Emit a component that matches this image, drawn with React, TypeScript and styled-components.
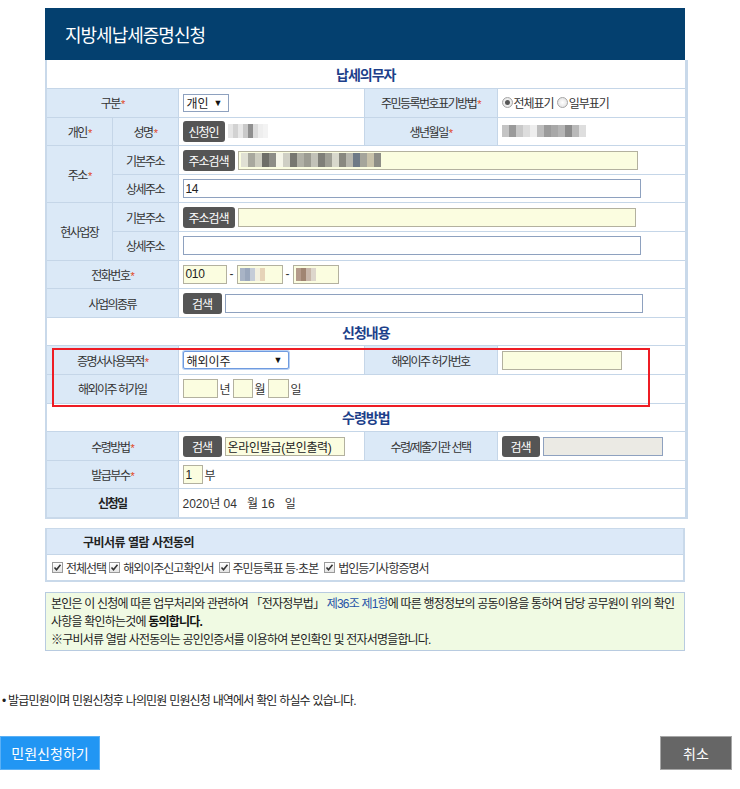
import * as React from 'react';
import styled, { createGlobalStyle, css } from 'styled-components';

const GlobalStyle = createGlobalStyle`
  html, body {
    margin: 0;
    padding: 0;
    background: #ffffff;
  }
  body {
    font-family: "Liberation Sans", "Noto Sans CJK KR", sans-serif;
    font-size: 12px;
    color: #333333;
  }
`;

const Page = styled.div`
  width: 740px;
  height: 789px;
  position: relative;
  padding-top: 8px;
  box-sizing: border-box;
`;

const Form = styled.div`
  margin-left: 45px;
  width: 640px;
`;

const Header = styled.div`
  height: 52px;
  background: #04406f;
  color: #ffffff;
  display: flex;
  align-items: center;
  padding-left: 20px;
  font-size: 18px;
  letter-spacing: -1px;
  font-family: "Noto Sans CJK KR", sans-serif;
`;

const TableWrap = styled.div`
  position: relative;
`;

const Table = styled.table`
  width: 640px;
  border-collapse: collapse;
  table-layout: fixed;
  border-left: 2px solid #c9d9ea;
  border-right: 3px solid #c9d9ea;
  border-bottom: 2px solid #c9d9ea;
`;

const Row = styled.tr`
  height: 28.6px;
`;

const SectionTitle = styled.td`
  text-align: center;
  color: #1d3f8a;
  font-size: 14px;
  font-weight: bold;
  letter-spacing: -1px;
  border-bottom: 1px solid #c5d6e8;
  padding: 0;
`;

const Label = styled.td<{ strong?: boolean }>`
  background: #dbe9f7;
  text-align: center;
  border: 1px solid #c5d6e8;
  padding: 0 2px;
  letter-spacing: -1.5px;
  white-space: nowrap;
  ${p =>
    p.strong &&
    css`
      font-weight: bold;
      color: #222;
    `}
`;

const Value = styled.td`
  border: 1px solid #c5d6e8;
  padding: 0 4px;
  white-space: nowrap;
  background: #ffffff;
`;

const Cell = styled.div<{ gap?: number }>`
  display: flex;
  align-items: center;
  gap: ${p => (p.gap ?? 3)}px;
`;

const Req = styled.span`
  color: #e0451b;
  font-size: 11px;
  margin-left: 1px;
  &::after {
    content: '*';
  }
`;

const DarkButton = styled.span<{ w?: number }>`
  display: inline-flex;
  align-items: center;
  justify-content: center;
  height: 21px;
  padding: 0 6px;
  ${p => p.w && `width: ${p.w}px;`}
  background: #555555;
  color: #ffffff;
  border-radius: 3px;
  font-size: 12px;
  letter-spacing: -1px;
  box-sizing: border-box;
`;

const Input = styled.div<{ w: number; tone?: 'yellow' | 'white' | 'gray' }>`
  width: ${p => p.w}px;
  height: 19px;
  box-sizing: border-box;
  display: flex;
  align-items: center;
  padding-left: 2px;
  gap: 4px;
  font-size: 12px;
  color: #222;
  overflow: hidden;
  letter-spacing: -0.3px;
  background: ${p =>
    p.tone === 'yellow' ? '#fbfde0' : p.tone === 'gray' ? '#ebeae4' : '#ffffff'};
  border: 1px solid ${p => (p.tone === 'yellow' ? '#b3b19f' : '#8ea1bf')};
`;

const FakeSelect = styled.div<{ w: number; focus?: boolean }>`
  width: ${p => p.w}px;
  height: 18px;
  box-sizing: border-box;
  display: flex;
  align-items: center;
  justify-content: space-between;
  padding: 0 5px 0 3px;
  font-size: 12px;
  color: #222;
  background: #fff;
  border: 1px solid ${p => (p.focus ? '#6f9be0' : '#8ea1bf')};
  box-shadow: ${p => (p.focus ? '0 0 0 1px #b8d0f3' : 'none')};
  border-radius: ${p => (p.focus ? '2px' : '0')};
`;

const Arrow = styled.span`
  font-size: 9px;
  color: #111;
`;

const Unit = styled.span`
  letter-spacing: -1px;
  margin-right: 1px;
`;

const RadioWrap = styled.label`
  display: inline-flex;
  align-items: center;
  gap: 1px;
  letter-spacing: -1px;
`;

const RadioDot = styled.span<{ checked?: boolean }>`
  width: 11px;
  height: 11px;
  border-radius: 50%;
  border: 1px solid #a6a6a6;
  background: radial-gradient(circle, #ffffff 0%, #dcdcdc 100%);
  box-sizing: border-box;
  display: inline-flex;
  align-items: center;
  justify-content: center;
  &::after {
    content: '';
    width: 5px;
    height: 5px;
    border-radius: 50%;
    background: ${p => (p.checked ? '#555' : 'transparent')};
  }
`;

const Redbox = styled.div`
  position: absolute;
  left: 7px;
  top: 288px;
  width: 598px;
  height: 59px;
  border: 2px solid #ee1c24;
  box-sizing: border-box;
  pointer-events: none;
`;

const Consent = styled.div`
  margin-top: 9px;
  border: 2px solid #c9d9ea;
  border-top-width: 1px;
`;

const ConsentHead = styled.div`
  height: 25px;
  background: #dce9f8;
  border-bottom: 1px solid #c5d6e8;
  display: flex;
  align-items: center;
  padding-left: 36px;
  font-weight: bold;
  color: #222;
  letter-spacing: -0.5px;
`;

const CheckRow = styled.div`
  height: 25px;
  display: flex;
  align-items: center;
  padding-left: 5px;
  letter-spacing: -1px;
`;

const CheckItem = styled.span<{ gap: number }>`
  display: inline-flex;
  align-items: center;
  gap: 3px;
  margin-right: ${p => p.gap}px;
`;

const Box = styled.span`
  width: 11px;
  height: 11px;
  border: 1px solid #9a9a9a;
  background: linear-gradient(#ffffff, #e4e4e4);
  box-sizing: border-box;
  display: inline-flex;
  align-items: center;
  justify-content: center;
`;

const Notice = styled.div`
  margin-top: 10px;
  background: #f0fae3;
  border: 1px solid #b8cbe0;
  padding: 2px 5px 1px 5px;
  color: #222;
  letter-spacing: -0.8px;
`;

const NoticeLine = styled.div`
  height: 18px;
  line-height: 18px;
  white-space: nowrap;
`;

const LawLink = styled.span`
  color: #2653a7;
`;

const Strong = styled.b`
  color: #111;
`;

const Bullet = styled.div`
  margin-top: 40px;
  padding-left: 2px;
  letter-spacing: -0.8px;
  color: #222;
`;

const Actions = styled.div`
  margin-top: 28px;
  display: flex;
  justify-content: space-between;
  padding-right: 8px;
`;

const ActionButton = styled.div<{ primary?: boolean }>`
  height: 34px;
  box-sizing: border-box;
  display: flex;
  align-items: center;
  justify-content: center;
  color: #ffffff;
  font-size: 14px;
  font-family: "Noto Sans CJK KR", sans-serif;
  width: ${p => (p.primary ? '100px' : '72px')};
  background: ${p => (p.primary ? '#2196f3' : '#666666')};
  border: 1px solid ${p => (p.primary ? '#5ab0f5' : '#a7a7a7')};
`;

const Mosaic = ({ cells, w = 5, h = 14 }: { cells: string[]; w?: number; h?: number }) => (
  <svg width={cells.length * w} height={h} style={{ display: 'block' }}>
    {cells.map((c, i) => (
      <rect key={i} x={i * w} y={0} width={w} height={h} fill={c} />
    ))}
  </svg>
);

const Check = () => (
  <Box>
    <svg width="9" height="9" viewBox="0 0 9 9">
      <polyline points="1.5,4.5 3.5,6.8 7.5,1.8" fill="none" stroke="#333" strokeWidth="1.6" />
    </svg>
  </Box>
);

const Radio = ({ checked, children }: { checked?: boolean; children: React.ReactNode }) => (
  <RadioWrap>
    <RadioDot checked={checked} />
    {children}
  </RadioWrap>
);

const nameCells = ['#e6e6e6', '#d2d2d2', '#e8e8e8', '#c9c9c9', '#8f8f8f', '#dcdcdc', '#eeeeee', '#f3f3f3'];
const birthCells = [
  '#c4c4c4', '#9a9a9a', '#c9c9c9', '#dddddd', '#eeeeee', '#bdbdbd', '#9b9b9b',
  '#a8a8a8', '#b5b5b5', '#8c8c8c', '#b9b9b9', '#dedede',
];
const addrCells = [
  '#e0e0d4', '#a8a89e', '#cdcdc0', '#6e6e68', '#8d8d86', '#f5f5e8', '#cfcfc4', '#777770',
  '#b1b1a6', '#9c9c92', '#c2c2b8', '#7f7f78', '#a0a096', '#d8d8cc', '#88887f', '#b7b7ad',
  '#6e7a86', '#a5a59b', '#c8c2aa', '#8d8d86',
];

export default function App() {
  return (
    <Page>
      <GlobalStyle />
      <Form>
        <Header>지방세납세증명신청</Header>
        <TableWrap>
          <Table>
            <colgroup>
              <col style={{ width: 66 }} />
              <col style={{ width: 66 }} />
              <col style={{ width: 186 }} />
              <col style={{ width: 133 }} />
              <col style={{ width: 189 }} />
            </colgroup>
            <tbody>
              <Row>
                <SectionTitle colSpan={5}>납세의무자</SectionTitle>
              </Row>
              <Row>
                <Label colSpan={2}>
                  구분<Req />
                </Label>
                <Value>
                  <FakeSelect w={46}>
                    개인<Arrow>▼</Arrow>
                  </FakeSelect>
                </Value>
                <Label>
                  주민등록번호표기방법<Req />
                </Label>
                <Value>
                  <Cell>
                    <Radio checked>전체표기</Radio>
                    <Radio>일부표기</Radio>
                  </Cell>
                </Value>
              </Row>
              <Row>
                <Label>
                  개인<Req />
                </Label>
                <Label>
                  성명<Req />
                </Label>
                <Value>
                  <Cell>
                    <DarkButton>신청인</DarkButton>
                    <Mosaic cells={nameCells} w={5} h={14} />
                  </Cell>
                </Value>
                <Label>
                  생년월일<Req />
                </Label>
                <Value>
                  <Cell>
                    <Mosaic cells={birthCells} w={7} h={12} />
                  </Cell>
                </Value>
              </Row>
              <Row>
                <Label rowSpan={2}>
                  주소<Req />
                </Label>
                <Label>기본주소</Label>
                <Value colSpan={3}>
                  <Cell>
                    <DarkButton>주소검색</DarkButton>
                    <Input w={400} tone="yellow">
                      <Mosaic cells={addrCells} w={7} h={14} />
                    </Input>
                  </Cell>
                </Value>
              </Row>
              <Row>
                <Label>상세주소</Label>
                <Value colSpan={3}>
                  <Input w={458}>14</Input>
                </Value>
              </Row>
              <Row>
                <Label rowSpan={2}>현사업장</Label>
                <Label>기본주소</Label>
                <Value colSpan={3}>
                  <Cell>
                    <DarkButton>주소검색</DarkButton>
                    <Input w={398} tone="yellow" />
                  </Cell>
                </Value>
              </Row>
              <Row>
                <Label>상세주소</Label>
                <Value colSpan={3}>
                  <Input w={458} />
                </Value>
              </Row>
              <Row>
                <Label colSpan={2}>
                  전화번호<Req />
                </Label>
                <Value colSpan={3}>
                  <Cell gap={3}>
                    <Input w={44} tone="yellow">010</Input>
                    <span>-</span>
                    <Input w={46} tone="yellow">
                      <Mosaic cells={['#a9b4c6', '#9aa7bc', '#c5ccd8', '#f3f0e0', '#e6d3b8']} w={5} h={13} />
                    </Input>
                    <span>-</span>
                    <Input w={46} tone="yellow">
                      <Mosaic cells={['#b49a8a', '#a08572', '#c8b7aa', '#ddd6cc']} w={5} h={13} />
                    </Input>
                  </Cell>
                </Value>
              </Row>
              <Row>
                <Label colSpan={2}>사업의종류</Label>
                <Value colSpan={3}>
                  <Cell>
                    <DarkButton w={39}>검색</DarkButton>
                    <Input w={418} />
                  </Cell>
                </Value>
              </Row>
              <Row>
                <SectionTitle colSpan={5}>신청내용</SectionTitle>
              </Row>
              <Row>
                <Label colSpan={2}>
                  증명서사용목적<Req />
                </Label>
                <Value>
                  <FakeSelect w={106} focus>
                    해외이주<Arrow>▼</Arrow>
                  </FakeSelect>
                </Value>
                <Label>해외이주 허가번호</Label>
                <Value>
                  <Input w={120} tone="yellow" />
                </Value>
              </Row>
              <Row>
                <Label colSpan={2}>해외이주 허가일</Label>
                <Value colSpan={3}>
                  <Cell gap={2}>
                    <Input w={35} tone="yellow" />
                    <Unit>년</Unit>
                    <Input w={20} tone="yellow" />
                    <Unit>월</Unit>
                    <Input w={21} tone="yellow" />
                    <Unit>일</Unit>
                  </Cell>
                </Value>
              </Row>
              <Row>
                <SectionTitle colSpan={5}>수령방법</SectionTitle>
              </Row>
              <Row>
                <Label colSpan={2}>
                  수령방법<Req />
                </Label>
                <Value>
                  <Cell>
                    <DarkButton w={39}>검색</DarkButton>
                    <Input w={120} tone="yellow">온라인발급(본인출력)</Input>
                  </Cell>
                </Value>
                <Label>수령/제출기관 선택</Label>
                <Value>
                  <Cell>
                    <DarkButton w={38}>검색</DarkButton>
                    <Input w={120} tone="gray" />
                  </Cell>
                </Value>
              </Row>
              <Row>
                <Label colSpan={2}>
                  발급부수<Req />
                </Label>
                <Value colSpan={3}>
                  <Cell gap={2}>
                    <Input w={20} tone="yellow">1</Input>
                    <span>부</span>
                  </Cell>
                </Value>
              </Row>
              <Row>
                <Label colSpan={2} strong>
                  신청일
                </Label>
                <Value colSpan={3}>2020년 04&nbsp;&nbsp;&nbsp;월 16&nbsp;&nbsp;&nbsp;일</Value>
              </Row>
            </tbody>
          </Table>
          <Redbox />
        </TableWrap>

        <Consent>
          <ConsentHead>구비서류 열람 사전동의</ConsentHead>
          <CheckRow>
            <CheckItem gap={3}>
              <Check />
              전체선택
            </CheckItem>
            <CheckItem gap={5}>
              <Check />
              해외이주신고확인서
            </CheckItem>
            <CheckItem gap={6}>
              <Check />
              주민등록표 등·초본
            </CheckItem>
            <CheckItem gap={0}>
              <Check />
              법인등기사항증명서
            </CheckItem>
          </CheckRow>
        </Consent>

        <Notice>
          <NoticeLine>
            본인은 이 신청에 따른 업무처리와 관련하여 「전자정부법」 <LawLink>제36조 제1항</LawLink>에 따른
            행정정보의 공동이용을 통하여 담당 공무원이 위의 확인
          </NoticeLine>
          <NoticeLine>
            사항을 확인하는것에 <Strong>동의합니다.</Strong>
          </NoticeLine>
          <NoticeLine>※구비서류 열람 사전동의는 공인인증서를 이용하여 본인확인 및 전자서명을합니다.</NoticeLine>
        </Notice>
      </Form>

      <Bullet>• 발급민원이며 민원신청후 나의민원 민원신청 내역에서 확인 하실수 있습니다.</Bullet>

      <Actions>
        <ActionButton primary>민원신청하기</ActionButton>
        <ActionButton>취소</ActionButton>
      </Actions>
    </Page>
  );
}
